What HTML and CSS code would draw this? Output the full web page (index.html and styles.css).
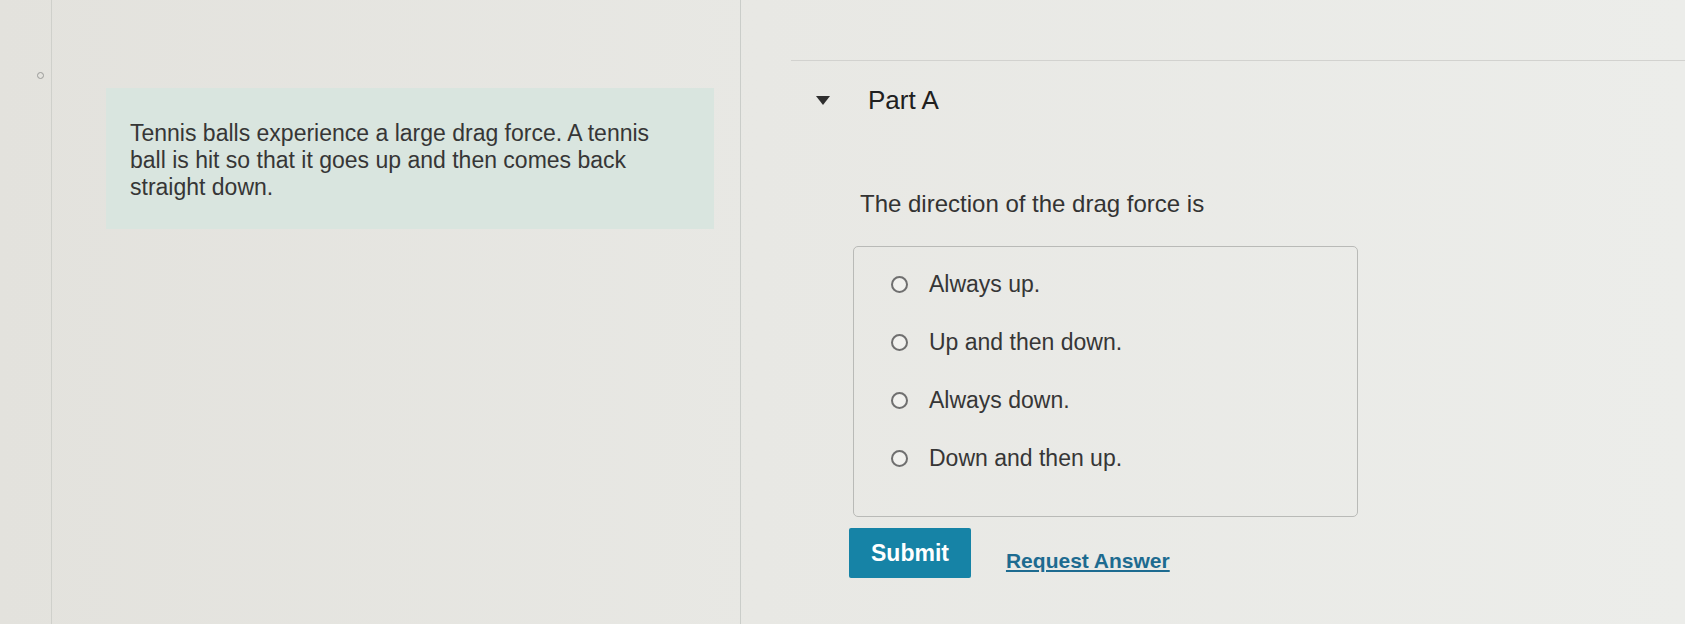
FILE: index.html
```html
<!DOCTYPE html>
<html lang="en">
<head>
  <meta charset="UTF-8" />
  <title>Part A - Drag Force</title>
  <meta name="viewport" content="width=device-width, initial-scale=1.0" />
  <link rel="stylesheet" href="styles.css">
</head>
<body>

<div class="page">

  <!-- left gutter -->
  <div class="gutter">
    <span class="gutter-dot"></span>
  </div>

  <!-- problem intro -->
  <div class="intro">
    <div class="intro-box">
      <p>Tennis balls experience a large drag force. A tennis ball is hit so that it goes up and then comes back straight down.</p>
    </div>
  </div>

  <!-- parts -->
  <div class="parts">
    <div class="rule"></div>

    <div class="part">
      <div class="part-head">
        <span class="caret"></span>
        <h2>Part A</h2>
      </div>

      <div class="part-body">
        <p class="question">The direction of the drag force is</p>

        <div class="choices">
          <label class="choice"><input type="radio" name="drag" value="0"><span class="radio"></span>Always up.</label>
          <label class="choice"><input type="radio" name="drag" value="1"><span class="radio"></span>Up and then down.</label>
          <label class="choice"><input type="radio" name="drag" value="2"><span class="radio"></span>Always down.</label>
          <label class="choice"><input type="radio" name="drag" value="3"><span class="radio"></span>Down and then up.</label>
        </div>

        <div class="actions">
          <button class="button">Submit</button>
          <a href="#" class="link">Request Answer</a>
        </div>
      </div>
    </div>
  </div>

</div>

</body>
</html>
```

FILE: styles.css
```css
body {
  margin: 0;
  font-family: 'Liberation Sans', Arial, sans-serif;
  background: linear-gradient(to right, #e3e2dd, #e8e8e4 45%, #ecedea);
  color: #333;
}

.page {
  display: flex;
  height: 624px;
  overflow: hidden;
}

.gutter {
  width: 52px;
  border-right: 1px solid #cfd0cb;
  padding-top: 72px;
  box-sizing: border-box;
}

.gutter-dot {
  display: block;
  width: 5px;
  height: 5px;
  margin-left: 37px;
  border: 1px solid #9a9a98;
  border-radius: 50%;
}

.intro {
  width: 689px;
  border-right: 1px solid #cacdc9;
  padding: 88px 0 0 54px;
  box-sizing: border-box;
}

.intro-box {
  width: 608px;
  height: 141px;
  background: #d9e5df;
  padding: 32px 40px 0 24px;
  box-sizing: border-box;
}

.intro-box p {
  margin: 0;
  font-size: 23px;
  line-height: 27px;
  color: #363636;
}

.parts {
  flex: 1;
}

.rule {
  margin: 60px 0 0 50px;
  border-top: 1px solid #d2d2cf;
}

.part {
  padding-left: 75px;
}

.part-head {
  display: flex;
  align-items: center;
  gap: 38px;
  margin-top: 24px;
}

.caret {
  width: 0;
  height: 0;
  border-left: 7px solid transparent;
  border-right: 7px solid transparent;
  border-top: 9px solid #2e2e2e;
}

.part-head h2 {
  margin: 0;
  font-size: 26px;
  line-height: 30px;
  font-weight: normal;
  color: #202020;
}

.part-body {
  padding-left: 37px;
}

.question {
  margin: 75px 0 0 7px;
  font-size: 24px;
  line-height: 28px;
  color: #333;
}

.choices {
  width: 505px;
  height: 271px;
  margin-top: 28px;
  border: 1px solid #b9bab7;
  border-radius: 5px;
  padding: 22px 0 0 37px;
  box-sizing: border-box;
  display: flex;
  flex-direction: column;
  gap: 28px;
}

.choice {
  display: flex;
  align-items: center;
  gap: 21px;
  height: 30px;
  font-size: 23px;
  color: #363636;
  cursor: pointer;
}

.choice input {
  display: none;
}

.radio {
  width: 13px;
  height: 13px;
  border: 2px solid #6f6f6f;
  border-radius: 50%;
  background: #f1f1ee;
}

.choice input:checked + .radio {
  background: #6f6f6f;
}

.actions {
  display: flex;
  align-items: center;
  gap: 35px;
  margin: 11px 0 0 -4px;
}

.button {
  background-color: #1683a6;
  color: #fff;
  border: none;
  height: 50px;
  padding: 0 22px;
  border-radius: 2px;
  font-family: 'Liberation Sans', Arial, sans-serif;
  font-size: 23px;
  font-weight: bold;
  cursor: pointer;
}

.link {
  margin-top: 16px;
  font-size: 21px;
  font-weight: bold;
  color: #1d6b90;
  text-decoration: underline;
}
```
